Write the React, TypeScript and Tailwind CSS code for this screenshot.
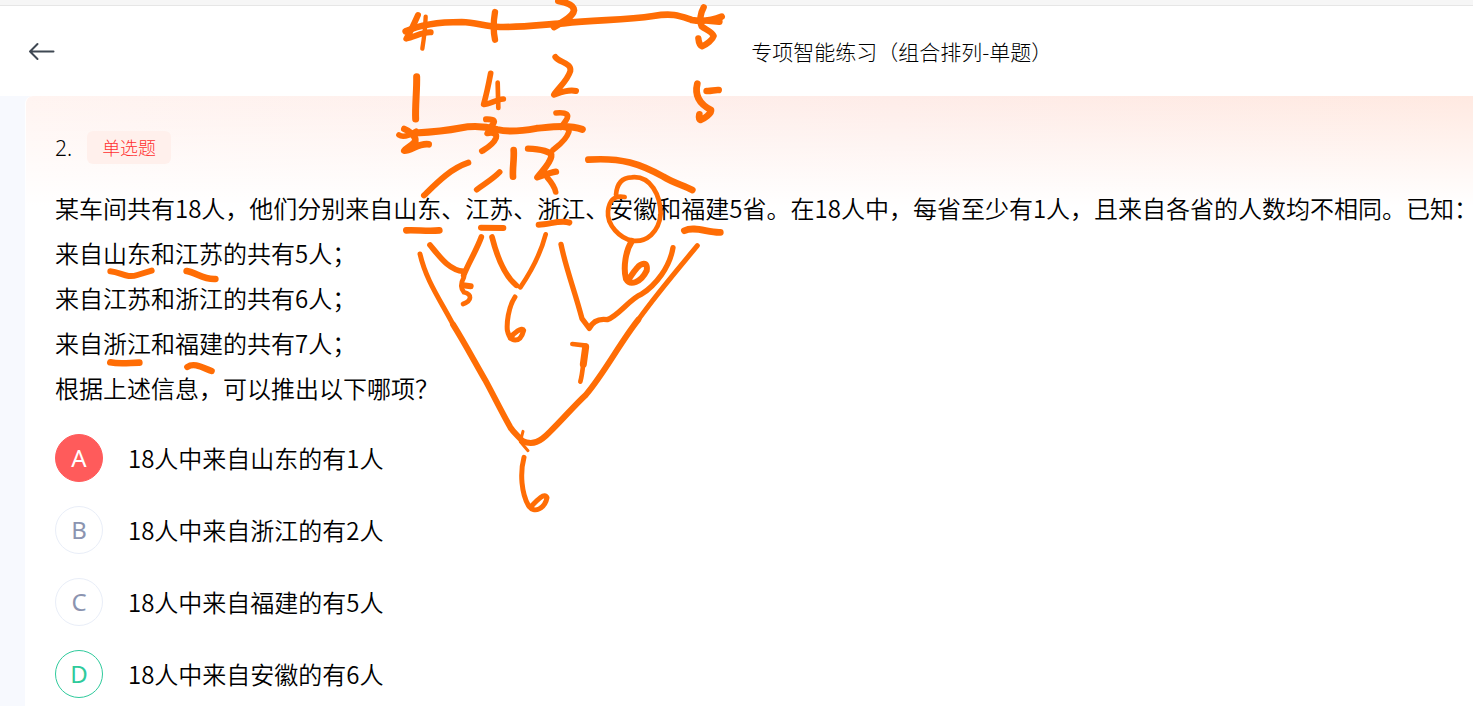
import React from "react";

type OptionState = "wrong" | "idle" | "correct";

const options: { key: string; text: string; state: OptionState }[] = [
  { key: "A", text: "18人中来自山东的有1人", state: "wrong" },
  { key: "B", text: "18人中来自浙江的有2人", state: "idle" },
  { key: "C", text: "18人中来自福建的有5人", state: "idle" },
  { key: "D", text: "18人中来自安徽的有6人", state: "correct" },
];

const badgeStyles: Record<OptionState, string> = {
  wrong: "border-[#ff5b5b] bg-[#ff5b5b] text-white",
  idle: "border-[#e9eef8] bg-white text-[#8b94b0]",
  correct: "border-[#2fca9c] bg-white text-[#2fca9c]",
};

const stem = [
  "某车间共有18人，他们分别来自山东、江苏、浙江、安徽和福建5省。在18人中，每省至少有1人，且来自各省的人数均不相同。已知：",
  "来自山东和江苏的共有5人；",
  "来自江苏和浙江的共有6人；",
  "来自浙江和福建的共有7人；",
  "根据上述信息，可以推出以下哪项？",
];

type Stroke = [path: string, width: number];
type StrokeGroup = { transform: string; strokes: Stroke[] };

// Pen strokes, grouped by the part of the question they annotate.
const strokeGroups: StrokeGroup[] = [
  {
    transform: "translate(390 0) scale(0.33333)",
    strokes: [
      ["M47 94 C90 74 160 66 215 66 C260 67 285 80 330 81 C410 82 460 73 520 70 C620 58 700 62 790 48 C850 38 870 48 905 60 C940 66 970 60 995 50", 20],
      ["M84 45 C72 72 62 94 49 116 C72 112 96 96 122 97", 18],
      ["M107 50 C106 80 102 115 97 146", 13],
      ["M955 62 L988 65", 20],
      ["M315 36 C310 65 310 95 315 119", 19],
      ["M505 3 C533 8 552 17 552 31 C549 50 520 66 492 81", 20],
      ["M941 22 C932 38 927 62 935 79 C945 88 967 95 971 108 C968 119 950 133 936 139 C930 137 926 126 925 115", 19],
      ["M80 230 C81 270 75 320 77 357", 21],
      ["M302 220 C296 252 289 285 281 313 C295 315 318 298 340 297", 17],
      ["M323 248 L325 324", 14],
      ["M496 171 C508 188 545 188 541 213 C533 241 505 264 492 284 C512 277 535 267 558 273", 18],
      ["M922 251 C914 283 926 311 963 330 C966 341 940 357 932 360 C926 357 927 348 928 343", 20],
      ["M950 273 C964 274 973 269 986 270", 20],
    ],
  },
  {
    transform: "translate(390 110) scale(0.33333)",
    strokes: [
      ["M76 69 C130 66 170 62 211 54 C248 47 285 49 322 59 C360 68 401 62 440 55 C485 51 536 44 577 58", 21],
      ["M27 75 C38 83 57 77 78 64", 17],
      ["M43 57 C59 63 79 79 76 94 C65 108 49 114 43 122 C63 123 88 98 116 103", 20],
      ["M288 28 C316 27 318 34 304 48 L292 70 C310 66 322 71 318 84 C310 104 291 114 276 123", 18],
      ["M498 9 C532 6 539 15 528 31 L513 52 C532 51 541 57 535 69 C528 91 506 106 489 120", 17],
      ["M371 120 C373 148 367 176 369 200", 20],
      ["M414 116 C450 117 488 125 484 139 C480 162 454 185 442 202 C463 195 479 188 498 185", 19],
      ["M472 203 C486 219 494 232 497 246", 17],
      ["M235 158 C181 176 140 219 102 256", 18],
      ["M329 186 C309 207 284 221 260 239", 17],
      ["M595 149 C696 142 751 162 820 200 C850 219 881 226 907 240", 20],
      ["M678 255 C680 224 694 203 725 202 C784 196 811 258 812 311 C807 368 769 397 728 392 C690 386 650 345 654 304 C657 275 670 254 704 261", 14],
      ["M49 361 C80 359 114 365 148 361", 20],
      ["M273 353 L340 354", 18],
      ["M446 344 C477 344 511 329 538 338", 18],
      ["M883 362 C914 347 955 369 991 367", 20],
    ],
  },
  {
    transform: "translate(390 225) scale(0.33333)",
    strokes: [
      ["M90 87 C108 166 150 224 189 298", 15],
      ["M745 284 C803 203 865 131 922 62", 15],
      ["M189 298 C224 354 251 405 285 464 C309 508 336 563 361 607 C372 625 386 634 397 648", 18],
      ["M397 648 C429 662 451 650 478 622 C522 579 552 542 588 509 C644 443 690 353 745 284", 18],
      ["M120 60 C148 94 177 136 221 139", 17],
      ["M274 36 C259 77 235 115 221 151", 17],
      ["M306 36 C320 91 340 149 379 181", 17],
      ["M467 28 C452 85 426 136 391 187", 14],
      ["M222 156 C212 174 211 190 222 202 C246 208 247 226 219 237", 14],
      ["M219 181 L242 184", 18],
      ["M375 216 C354 248 350 296 352 316 C360 355 391 355 401 316 C397 305 370 324 361 340", 15],
      ["M513 58 C528 132 555 200 576 281 L598 310 C606 294 621 279 652 284 C684 274 719 222 754 208 C798 180 839 127 849 68", 16],
      ["M547 357 L589 362 C578 401 581 435 571 470", 14],
      ["M587 366 L580 418", 21],
      ["M726 48 C707 76 699 127 708 162 C721 184 753 172 770 137 C775 106 752 115 741 129 C727 144 721 158 713 167", 18],
      ["M399 619 L391 650 L414 677", 9],
      ["M402 697 C389 746 395 805 415 841 C433 870 465 848 471 818 C464 800 439 828 422 846", 15],
    ],
  },
  {
    transform: "translate(40 225) scale(0.33333)",
    strokes: [
      ["M211 139 C244 142 260 161 292 150 L335 137", 18],
      ["M440 138 C470 143 489 164 526 162", 20],
      ["M211 412 C240 418 271 413 298 413", 20],
      ["M442 426 C463 411 491 430 515 438", 19],
    ],
  },
];

function BackIcon() {
  return (
    <svg
      viewBox="0 0 28 20"
      className="h-5 w-7"
      fill="none"
      stroke="#3f4853"
      strokeWidth="2"
      strokeLinecap="round"
      strokeLinejoin="round"
      aria-hidden="true"
    >
      <path d="M9.5 3 L2 10.5 L9.5 18 M2 10.5 H25.5" />
    </svg>
  );
}

function PenNotes() {
  return (
    <svg
      viewBox="0 0 800 706"
      className="pointer-events-none absolute top-0 left-0 h-[706px] w-[800px]"
      fill="none"
      stroke="#ff6d05"
      strokeLinecap="round"
      strokeLinejoin="round"
      aria-hidden="true"
    >
      {strokeGroups.map((group) => (
        <g key={group.transform} transform={group.transform}>
          {group.strokes.map(([d, width]) => (
            <path key={d} d={d} strokeWidth={width} />
          ))}
        </g>
      ))}
    </svg>
  );
}

export default function App() {
  return (
    <div className="relative flex min-h-screen flex-col overflow-hidden bg-[#f7f9fe] font-['Noto_Sans_CJK_SC',sans-serif] font-light text-black">
      <div className="h-1.5 border-b border-[#e6e6e6] bg-[#f6f6f6]" />
      <header className="grid h-[90px] grid-cols-[51%_1fr] items-center bg-white">
        <div className="pl-7">
          <button type="button" aria-label="返回" className="block">
            <BackIcon />
          </button>
        </div>
        <h1 className="text-[21px] leading-8 whitespace-nowrap">专项智能练习（组合排列-单题）</h1>
      </header>

      <main className="ml-[25px] grow rounded-tl-lg border-l border-white bg-white bg-[linear-gradient(to_bottom,rgba(255,255,255,0)_0px,#ffffff_110px),linear-gradient(to_right,#fff4f1,#feece8_60%,#ffe9e1)] pt-[35px] pl-[29px]">
        <div className="flex items-center gap-[15px]">
          <span className="font-['Noto_Sans',sans-serif] text-[21px] leading-8">2.</span>
          <span className="rounded-md bg-[#fff0ec] px-[15px] text-lg leading-[33px] text-[#ff3030]">单选题</span>
        </div>

        <div className="mt-[21px] text-2xl leading-[45px] font-[350] whitespace-nowrap">
          {stem.map((line) => (
            <p key={line}>{line}</p>
          ))}
        </div>

        <fieldset aria-label="选项" className="mt-6 flex flex-col items-start gap-6">
          {options.map((option) => (
            <label key={option.key} className="relative flex cursor-pointer items-center gap-[25px]">
              <input
                type="radio"
                name="answer"
                value={option.key}
                defaultChecked={option.state === "wrong"}
                className="sr-only"
              />
              <span
                className={`flex size-12 items-center justify-center rounded-full border font-['Noto_Sans',sans-serif] text-2xl font-normal ${badgeStyles[option.state]}`}
              >
                {option.key}
              </span>
              <span className="text-2xl font-[350]">{option.text}</span>
            </label>
          ))}
        </fieldset>
      </main>

      <PenNotes />
    </div>
  );
}
